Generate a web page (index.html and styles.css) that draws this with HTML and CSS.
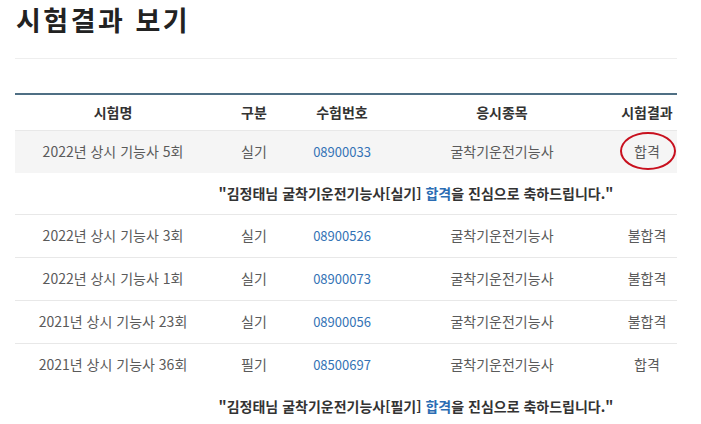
FILE: index.html
```html
<!DOCTYPE html>
<html lang="ko">
<head>
<meta charset="utf-8">
<link rel="stylesheet" href="styles.css">
</head>
<body>
<div class="page">
  <h1 class="title">시험결과 보기</h1>
  <div class="divider"></div>
  <table class="results">
    <thead>
      <tr>
        <th class="c1">시험명</th>
        <th class="c2">구분</th>
        <th class="c3">수험번호</th>
        <th class="c4">응시종목</th>
        <th class="c5">시험결과</th>
      </tr>
    </thead>
    <tbody>
      <tr class="row shaded">
        <td>2022년 상시 기능사 5회</td>
        <td>실기</td>
        <td class="num">08900033</td>
        <td>굴착기운전기능사</td>
        <td><span class="marked">합격<span class="circle"></span></span></td>
      </tr>
      <tr class="congrats">
        <td colspan="5">"김정태님 굴착기운전기능사[실기] <span class="pass">합격</span>을 진심으로 축하드립니다."</td>
      </tr>
      <tr class="row">
        <td>2022년 상시 기능사 3회</td>
        <td>실기</td>
        <td class="num">08900526</td>
        <td>굴착기운전기능사</td>
        <td>불합격</td>
      </tr>
      <tr class="row">
        <td>2022년 상시 기능사 1회</td>
        <td>실기</td>
        <td class="num">08900073</td>
        <td>굴착기운전기능사</td>
        <td>불합격</td>
      </tr>
      <tr class="row">
        <td>2021년 상시 기능사 23회</td>
        <td>실기</td>
        <td class="num">08900056</td>
        <td>굴착기운전기능사</td>
        <td>불합격</td>
      </tr>
      <tr class="row">
        <td>2021년 상시 기능사 36회</td>
        <td>필기</td>
        <td class="num">08500697</td>
        <td>굴착기운전기능사</td>
        <td>합격</td>
      </tr>
      <tr class="congrats">
        <td colspan="5">"김정태님 굴착기운전기능사[필기] <span class="pass">합격</span>을 진심으로 축하드립니다."</td>
      </tr>
    </tbody>
  </table>
</div>
</body>
</html>
```

FILE: styles.css
```css
html, body {
  margin: 0;
  padding: 0;
  background: #ffffff;
}
body {
  font-family: "Noto Sans CJK KR", "Noto Sans", sans-serif;
  color: #555;
}
.page {
  padding: 0 24px 0 15px;
}
.title {
  margin: 0;
  padding: 3px 0 0 1px;
  font-size: 27px;
  line-height: 34px;
  font-weight: 700;
  color: #222;
  letter-spacing: 2.5px;
}
.divider {
  margin-top: 21px;
  height: 1px;
  background: #eeeeee;
}
.results {
  margin-top: 34px;
  width: 662px;
  border-collapse: collapse;
  table-layout: fixed;
  border-top: 2px solid #4f6f84;
}
.results th {
  height: 33px;
  padding: 0 0 2px;
  font-size: 14px;
  font-weight: 700;
  color: #333;
  text-align: center;
}
.c1 { width: 196px; }
.c2 { width: 86px; }
.c3 { width: 90px; }
.c4 { width: 230px; }
.c5 { width: 60px; }
.row td {
  height: 40px;
  padding: 0 0 2px;
  border-top: 1px solid #e8e8e8;
  font-size: 14px;
  color: #5a5a5a;
  text-align: center;
}
.row.shaded td {
  background: #f5f5f5;
}
.row td.num {
  font-size: 13px;
  color: #3473b5;
}
.congrats td {
  height: 39px;
  padding: 0 0 2px 140px;
  font-size: 14px;
  font-weight: 700;
  color: #333;
  text-align: center;
}
.pass {
  color: #2b6cb3;
}
.marked {
  position: relative;
  display: inline-block;
}
.circle {
  position: absolute;
  left: -14px;
  top: -9px;
  width: 52px;
  height: 34px;
  border: 2.5px solid #c8101e;
  border-radius: 50%;
}
```
